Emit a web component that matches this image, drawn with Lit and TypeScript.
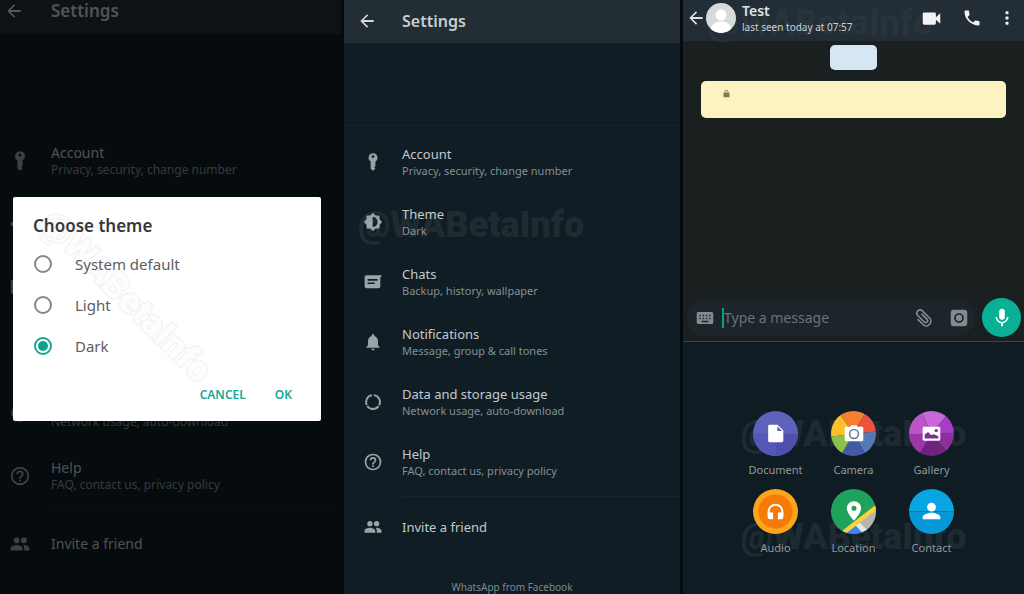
import { LitElement, html, css, svg, nothing } from "lit";
import { customElement, property, state } from "lit/decorators.js";

const reset = css`
  * { box-sizing: border-box; }
  button { margin: 0; padding: 0; border: 0; background: none; color: inherit; font: inherit; cursor: pointer; }
  svg { display: block; flex: none; }
  h1, h2, p, ul { margin: 0; padding: 0; font-weight: inherit; list-style: none; }
`;

const glyphs: Record<string, unknown> = {
  back: svg`<path d="M20 10.900H7.800l5.500-5.500L12 4l-8 8 8 8 1.400-1.400-5.600-5.500H20z"/>`,
  key: svg`<path fill-rule="evenodd" d="M12 1.500a5.300 5.300 0 0 0-2.800 9.800V20l2.700 2.500 2.900-2.300-1.200-1.900 1.300-1.600v-5.400A5.300 5.300 0 0 0 12 1.500zm0 2.300a1.700 1.700 0 1 1 0 3.400 1.700 1.700 0 0 1 0-3.400z"/>`,
  theme: svg`<path d="M19 14.900 21.900 12 19 9.100V5h-4.100L12 2.100 9.100 5H5v4.100L2.100 12 5 14.900V19h4.100l2.900 2.900 2.900-2.900H19z" stroke="currentColor" stroke-width="1.600" stroke-linejoin="round"/><path d="M11.600 6a6 6 0 0 1 0 12z" fill="#101d24"/>`,
  chats: svg`<path fill-rule="evenodd" d="M4 4h18.500L20.800 7v10.500a2 2 0 0 1-2 2H4a2 2 0 0 1-2-2V6c0-1.100.9-2 2-2zm1.500 4.500v2h12v-2zm0 4v2h8.500v-2z"/>`,
  bell: svg`<path d="M12 22a2 2 0 0 0 2-2h-4a2 2 0 0 0 2 2zm6-6v-5c0-3.070-1.640-5.640-4.500-6.320V4a1.500 1.500 0 0 0-3 0v.68C7.630 5.360 6 7.920 6 11v5l-2 2v1h16v-1l-2-2z"/>`,
  data: svg`<g fill="none" stroke="currentColor" stroke-width="2.300"><path d="M13.100 3.800a8.300 8.300 0 0 1 6.300 12.100M18.700 17A8.300 8.300 0 0 1 5.100 16.800M4.500 15.600A8.300 8.300 0 0 1 10.900 3.800"/></g>`,
  help: svg`<path d="M11 18h2v-2h-2v2zm1-16a10 10 0 1 0 0 20 10 10 0 0 0 0-20zm0 18a8 8 0 1 1 0-16 8 8 0 0 1 0 16zm0-14a4 4 0 0 0-4 4h2a2 2 0 1 1 4 0c0 2-3 1.750-3 5h2c0-2.250 3-2.500 3-5a4 4 0 0 0-4-4z"/>`,
  people: svg`<path d="M16.300 11.200a3.200 3.200 0 1 0 0-6.400 3.200 3.200 0 0 0 0 6.400zm-8 0a3.200 3.200 0 1 0 0-6.400 3.200 3.200 0 0 0 0 6.400zm0 1.800c-2.330 0-6.500 1.170-6.500 3.500V19h12.900v-2.500C14.700 14.170 10.630 13 8.300 13zm8 0c-.29 0-.62.02-.97.05A4.200 4.200 0 0 1 16.500 16.500V19H22.200v-2.500c0-2.330-3.570-3.500-5.900-3.500z"/>`,
  video: svg`<path d="M17 10.500V6.500a1.500 1.500 0 0 0-1.500-1.500h-12A1.500 1.500 0 0 0 2 6.500v11A1.500 1.500 0 0 0 3.500 19h12a1.500 1.500 0 0 0 1.500-1.500v-4l5 4.500V6z"/>`,
  phone: svg`<path d="M6.620 10.790a15.100 15.100 0 0 0 6.590 6.590l2.200-2.200c.27-.27.67-.36 1.020-.24 1.120.37 2.330.57 3.570.57.55 0 1 .45 1 1V20c0 .55-.45 1-1 1A17 17 0 0 1 3 4c0-.55.45-1 1-1h3.500c.55 0 1 .45 1 1 0 1.250.2 2.450.57 3.570.11.35.03.74-.25 1.020z"/>`,
  more: svg`<rect x="10" y="3" width="4" height="4" rx="1"/><rect x="10" y="10" width="4" height="4" rx="1"/><rect x="10" y="17" width="4" height="4" rx="1"/>`,
  lock: svg`<path fill-rule="evenodd" d="M18 9h-1V7A5 5 0 0 0 7 7v2H6a2 2 0 0 0-2 2v9c0 1.100.9 2 2 2h12a2 2 0 0 0 2-2v-9a2 2 0 0 0-2-2zM9 9V7a3 3 0 0 1 6 0v2z"/>`,
  keyboard: svg`<path fill-rule="evenodd" d="M3 4h18a2 2 0 0 1 2 2v12a2 2 0 0 1-2 2H3a2 2 0 0 1-2-2V6c0-1.100.9-2 2-2zm1.500 3.500v2h2v-2zm4.300 0v2h2v-2zm4.300 0v2h2v-2zm4.300 0v2h2v-2zM4.500 11.500v2h2v-2zm4.300 0v2h2v-2zm4.300 0v2h2v-2zm4.300 0v2h2v-2zM7.500 15.500v2h9v-2z"/>`,
  clip: svg`<path d="M6.500 8.500v9a5.500 5.500 0 0 0 11 0V5.500a3.900 3.900 0 0 0-7.800 0v11a2.300 2.300 0 0 0 4.600 0V7" transform="rotate(-45 12 12)" fill="none" stroke="currentColor" stroke-width="2"/>`,
  camera: svg`<path fill-rule="evenodd" d="M5 1h14a4 4 0 0 1 4 4v14a4 4 0 0 1-4 4H5a4 4 0 0 1-4-4V5a4 4 0 0 1 4-4zm7 4.500a6.500 6.500 0 1 0 0 13 6.500 6.500 0 0 0 0-13z"/><circle cx="12" cy="12" r="4.200"/>`,
  mic: svg`<path d="M12 14a3 3 0 0 0 3-3V5a3 3 0 0 0-6 0v6a3 3 0 0 0 3 3zm5.300-3a5.300 5.300 0 0 1-10.600 0H5c0 3.410 2.720 6.230 6 6.720V21h2v-3.280c3.280-.48 6-3.300 6-6.720z"/>`,
};

const icon = (name: string, size: number) =>
  html`<svg viewBox="0 0 24 24" width=${size} height=${size} fill="currentColor" aria-hidden="true">${glyphs[name]}</svg>`;

const rows = [
  { icon: "key", title: "Account", note: "Privacy, security, change number" },
  { icon: "theme", title: "Theme", note: "Dark" },
  { icon: "chats", title: "Chats", note: "Backup, history, wallpaper" },
  { icon: "bell", title: "Notifications", note: "Message, group & call tones" },
  { icon: "data", title: "Data and storage usage", note: "Network usage, auto-download" },
  { icon: "help", title: "Help", note: "FAQ, contact us, privacy policy" },
];

@customElement("settings-screen")
export class SettingsScreen extends LitElement {
  @property({ type: Boolean, reflect: true }) large = false;

  static styles = [reset, css`
    :host { display: flex; flex-direction: column; min-height: 100%; background: #101d24; color: #c3cacd; position: relative;
      --bar: 43px; --bar-pad: 2px; --hero: 83px; --row: 60px; --lead: 58px; --title: 16px; --text: 13px; --note: 11px; --line: 17px; --inset: 13px; }
    :host([large]) { --bar: 34px; --bar-pad: 12px; --hero: 92px; --row: 63px; --lead: 51px; --title: 17px; --text: 14px; --note: 12px; --line: 18px; --inset: 4px; }
    .bar { display: grid; grid-template-columns: var(--lead) 1fr; align-items: center; height: var(--bar); padding-bottom: var(--bar-pad); background: #222d34; }
    .back { padding-left: var(--inset); color: #d5dadc; }
    .title { font-size: var(--title); line-height: 20px; font-weight: 600; color: #c9cfd1; }
    .hero { height: var(--hero); border-bottom: 1px solid #14262b; }
    .list { padding-top: 6px; }
    :host([large]) .hero { border-color: transparent; }
    :host([large]) .list { padding-top: 3px; }
    .row { display: grid; grid-template-columns: var(--lead) 1fr; align-items: center; width: 100%; height: var(--row); text-align: left; }
    .icon { display: flex; justify-content: center; color: #9aa3a6; }
    :host([large]) .icon { padding-right: 11px; }
    .name { display: block; font-size: var(--text); line-height: var(--line); }
    .note { display: block; font-size: var(--note); line-height: 16px; color: #849094; }
    .invite { margin-top: 4px; }
    .invite::before { content: ""; display: block; margin-left: var(--lead); height: 1px; background: #18262c; }
    .foot { margin-top: auto; text-align: center; font-size: 10px; line-height: 13px; color: #7d898d; }
    .mark { position: absolute; left: 14px; top: 201px; font: 900 36px/48px Roboto, sans-serif; color: #ffffff14; pointer-events: none; }
  `];

  render() {
    const size = this.large ? 22 : 20;
    return html`
      <header class="bar">
        <button class="back" aria-label="Back">${icon("back", 20)}</button>
        <h1 class="title">Settings</h1>
      </header>
      <div class="hero"></div>
      <ul class="list">
        ${rows.map((r) => html`<li><button class="row">
          <span class="icon">${icon(r.icon, size)}</span>
          <span><span class="name">${r.title}</span><span class="note">${r.note}</span></span>
        </button></li>`)}
        <li class="invite"><button class="row">
          <span class="icon">${icon("people", size)}</span><span class="name">Invite a friend</span>
        </button></li>
      </ul>
      ${this.large ? nothing : html`<p class="foot">WhatsApp from Facebook</p><span class="mark" aria-hidden="true">@WABetaInfo</span>`}
    `;
  }
}

@customElement("theme-dialog")
export class ThemeDialog extends LitElement {
  @state() private choice = "Dark";

  static styles = [reset, css`
    :host { position: relative; display: block; overflow: hidden; background: #fff; border-radius: 2px; padding: 17px 20px 14px; color: #5a5e60; }
    .title { font-size: 17px; line-height: 24px; font-weight: 600; color: #36393b; }
    .options { margin: 5px 0 0; padding: 0; border: 0; }
    .option { display: flex; align-items: center; gap: 23px; height: 41px; font-size: 15px; }
    .radio { appearance: none; display: grid; place-content: center; width: 18px; height: 18px; margin: 0 0 0 1px; border: 2px solid #858788; border-radius: 50%; }
    .radio:checked { border-color: #17a68f; }
    .radio:checked::before { content: ""; width: 10px; height: 10px; border-radius: 50%; background: #0aa389; }
    .actions { display: flex; justify-content: flex-end; gap: 29px; margin-top: 17px; padding-right: 9px; }
    .action { font-size: 12px; line-height: 24px; font-weight: 600; color: #14aa93; }
    .mark { position: absolute; left: 0; top: 75px; font: 900 36px/48px Roboto, sans-serif; color: #fdfdfd; -webkit-text-stroke: 2px #f0f0f0; paint-order: stroke fill; transform: rotate(45deg); pointer-events: none; }
    .title, .options, .actions { position: relative; z-index: 1; }
  `];

  render() {
    return html`
      <span class="mark" aria-hidden="true">@WABetaInfo</span>
      <h2 class="title">Choose theme</h2>
      <fieldset class="options" aria-label="Choose theme">
        ${["System default", "Light", "Dark"].map((o) => html`<label class="option">
          <input class="radio" type="radio" name="theme" .checked=${this.choice === o} @change=${() => (this.choice = o)} />${o}
        </label>`)}
      </fieldset>
      <div class="actions"><button class="action">CANCEL</button><button class="action">OK</button></div>
    `;
  }
}

const wedge = (from: number, to: number, fill: string) => {
  const at = (deg: number) => `${24 + 40 * Math.cos((deg * Math.PI) / 180)} ${24 + 40 * Math.sin((deg * Math.PI) / 180)}`;
  return svg`<path d="M24 24L${at(from)}L${at(to)}z" fill=${fill}/>`;
};

const discs = [
  { label: "Document", art: svg`<path fill="#5f62bb" d="M0 0h48v48H0z"/><path fill="#5459b8" d="M0 24h24v24H0z"/><path fill="#4f4fae" d="M24 24h24v24H24z"/><path fill="#fff" fill-rule="evenodd" d="M18 15h8l6 6v10.500a1.500 1.500 0 0 1-1.500 1.500H18a1.500 1.500 0 0 1-1.500-1.500v-15c0-.9.6-1.500 1.500-1.500zm7.800 1.500v5h5z"/>` },
  { label: "Camera", art: svg`${wedge(-5, 60, "#5479b5")}${wedge(60, 120, "#4558a5")}${wedge(120, 172, "#8bc04a")}${wedge(172, 235, "#fbc02b")}${wedge(235, 300, "#f5812f")}${wedge(300, 355, "#ec5440")}<path fill="#fff" d="M16.500 17h4l1.500-1.500h5L28.500 17h4c1 0 1.500.7 1.500 1.500v12c0 1-.6 1.500-1.500 1.500h-16c-1 0-1.500-.6-1.500-1.500v-12c0-.9.6-1.500 1.500-1.500z"/><circle cx="24.500" cy="24.500" r="4.500" fill="#fff" stroke="#687d91" stroke-width="1.600"/>` },
  { label: "Gallery", art: svg`${wedge(-2, 50, "#8e2f9e")}${wedge(50, 120, "#6f2380")}${wedge(120, 178, "#9b37a8")}${wedge(178, 245, "#bd55ca")}${wedge(245, 310, "#c968d8")}${wedge(310, 358, "#a63dc8")}<rect x="15" y="17" width="18" height="14.500" rx="1.500" fill="#fff"/><path fill="#7a3490" d="M17 29v-4l3.500-2.500 3 3 3-.8 4.500 2V29z"/><circle cx="28.800" cy="21" r="1.700" fill="#7a3490"/>` },
  { label: "Audio", art: svg`<path fill="#faa51c" d="M0 0h48v48H0z"/><circle cx="24" cy="24" r="17.500" fill="#f57a08"/><path fill="none" stroke="#fff" stroke-width="2" d="M17 28v-4a7 7 0 0 1 14 0v4"/><path fill="#fff" d="M16 25h5.500v7H18a2 2 0 0 1-2-2zm10.500 0H32v5a2 2 0 0 1-2 2h-3.500z"/>` },
  { label: "Location", art: svg`<path fill="#1fa25b" d="M0 0h48v48H0z"/><path fill="#4285e8" d="M12 50 26 36l9 14z"/><path fill="#b7b4ae" d="M48 18 28 34l12 14h8z"/><path fill="#e4e4e4" d="m25 37 4-3 10 10-4 4z"/><path stroke="#fbd23c" stroke-width="4.500" d="M8 50 52 16"/><path fill="#fff" fill-rule="evenodd" d="M24.500 13.500a7.300 7.300 0 0 0-7.300 7.300c0 5.200 7.300 12.700 7.300 12.700s7.300-7.500 7.300-12.700a7.300 7.300 0 0 0-7.300-7.300zm0 4.500a2.600 2.600 0 1 1 0 5.200 2.600 2.600 0 0 1 0-5.200z"/>` },
  { label: "Contact", art: svg`<path fill="#08a5e2" d="M0 0h48v24H0z"/><path fill="#0798d8" d="M0 24h48v24H0z"/><circle cx="24" cy="19.500" r="4.500" fill="#fff"/><path fill="#fff" d="M15 32v-2c0-3 6-4.600 9-4.600s9 1.600 9 4.600v2z"/>` },
];

@customElement("chat-screen")
export class ChatScreen extends LitElement {
  static styles = [reset, css`
    :host { display: flex; flex-direction: column; background: #1a201f; color: #dfe3e4; }
    .bar { position: relative; display: flex; align-items: center; height: 41px; padding: 0 11px 5px 3px; background: #222d36; }
    .avatar { border-radius: 50%; }
    .who { flex: 1; padding-left: 6px; }
    .name { font-size: 14px; line-height: 17px; font-weight: 600; }
    .seen { font-size: 10px; line-height: 16px; color: #ccd2d5; }
    .tools { display: flex; align-items: center; gap: 20px; color: #f1f3f4; }
    .more { margin: 0 -3px 0 -4px; }
    .mark { position: absolute; font: 900 36px/48px Roboto, sans-serif; color: #ffffff14; pointer-events: none; }
    .bar .mark { left: 24px; top: -1px; color: #ffffff08; }
    .log { flex: 1; display: flex; flex-direction: column; align-items: center; gap: 11px; padding: 4px 18px; }
    .day { width: 47px; height: 25px; border-radius: 5px; background: #d5e7f3; }
    .notice { align-self: stretch; height: 37px; border-radius: 5px; background: #fdf3c1; color: #81795a; padding: 8px 21px; }
    .compose { display: flex; align-items: center; gap: 7px; padding: 0 3px 4px 4px; }
    .pill { flex: 1; min-width: 0; display: flex; align-items: center; height: 36px; border-radius: 18px; background: #1c262a; padding: 0 7px 0 9px; color: #828b90; }
    .text { flex: 1; min-width: 0; height: 20px; margin-left: 8px; padding: 0; border: 0; border-left: 2px solid #08a188; background: none; outline: 0; color: #dfe3e4; font: inherit; font-size: 14px; }
    .text::placeholder { color: #697378; opacity: 1; }
    .clip { margin-right: 17px; }
    .mic { display: grid; place-items: center; width: 39px; height: 39px; border-radius: 50%; background: #09b096; color: #fff; }
    .attach { position: relative; display: grid; grid-template-columns: repeat(3, 78px); justify-content: center; row-gap: 15px; padding: 69px 0 42px; border-top: 1px solid #3a4447; background: #0f1c24; }
    .item { position: relative; display: flex; flex-direction: column; align-items: center; gap: 6px; height: 63px; font-size: 11px; line-height: 15px; color: #8f999d; }
    .disc { border-radius: 50%; }
    .low, .high { left: 0; right: 0; text-align: center; }
    .high { top: 68px; }
    .low { top: 171px; }
  `];

  render() {
    return html`
      <header class="bar">
        <span class="mark" aria-hidden="true">@WABetaInfo</span>
        <button aria-label="Back">${icon("back", 20)}</button>
        <svg class="avatar" viewBox="0 0 30 30" width="30" height="30" aria-hidden="true">
          <path fill="#d7dadb" d="M0 0h30v30H0z"/><circle cx="15" cy="12" r="5.500" fill="#fff"/><path fill="#fff" d="M5 26c0-5 5-7.500 10-7.500S25 21 25 26v4H5z"/>
        </svg>
        <div class="who"><h2 class="name">Test</h2><p class="seen">last seen today at 07:57</p></div>
        <div class="tools">
          <button aria-label="Video call">${icon("video", 21)}</button>
          <button aria-label="Call">${icon("phone", 20)}</button>
          <button class="more" aria-label="More options">${icon("more", 18)}</button>
        </div>
      </header>
      <div class="log"><div class="day"></div><div class="notice">${icon("lock", 9)}</div></div>
      <div class="compose">
        <div class="pill">
          <button aria-label="Keyboard">${icon("keyboard", 18)}</button>
          <input class="text" type="text" aria-label="Message" placeholder="Type a message" />
          <button class="clip" aria-label="Attach">${icon("clip", 20)}</button>
          <button aria-label="Camera">${icon("camera", 18)}</button>
        </div>
        <button class="mic" aria-label="Record voice message">${icon("mic", 22)}</button>
      </div>
      <div class="attach">
        <span class="mark high" aria-hidden="true">@WABetaInfo</span>
        <span class="mark low" aria-hidden="true">@WABetaInfo</span>
        ${discs.map((d) => html`<button class="item">
          <svg class="disc" viewBox="1 1 46 46" width="45" height="45" aria-hidden="true">${d.art}</svg>${d.label}
        </button>`)}
      </div>
    `;
  }
}

@customElement("app-root")
export class AppRoot extends LitElement {
  static styles = css`
    :host { display: grid; grid-template-columns: 341fr 336fr 341fr; gap: 3px; height: 100vh; overflow: hidden; background: #050a0c; font-family: "Noto Sans", "Open Sans", sans-serif; }
    .pane { min-width: 0; }
    .dimmed { position: relative; }
    .scrim { position: absolute; inset: 0; display: grid; align-items: center; padding: 24px 20px 0 13px; background: rgba(0, 0, 0, 0.6); }
  `;

  render() {
    return html`
      <div class="pane dimmed">
        <settings-screen large></settings-screen>
        <div class="scrim"><theme-dialog role="dialog" aria-label="Choose theme"></theme-dialog></div>
      </div>
      <settings-screen class="pane"></settings-screen>
      <chat-screen class="pane"></chat-screen>
    `;
  }
}
